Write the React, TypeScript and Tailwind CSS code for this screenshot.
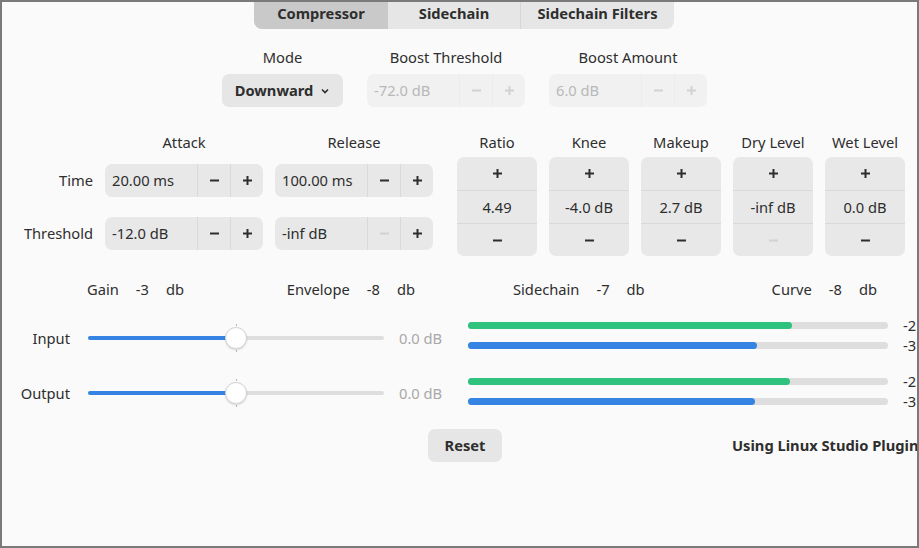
import React from "react";

function Plus({ faded }: { faded?: boolean }) {
  return (
    <svg width="11" height="11" viewBox="0 0 11 11" className={faded ? "text-[#d2d2d2]" : "text-[#2e2e2e]"}>
      <path d="M5.5 1v9M1 5.5h9" stroke="currentColor" strokeWidth="2" />
    </svg>
  );
}

function Minus({ faded }: { faded?: boolean }) {
  return (
    <svg width="11" height="11" viewBox="0 0 11 11" className={faded ? "text-[#d2d2d2]" : "text-[#2e2e2e]"}>
      <path d="M1 5.5h9" stroke="currentColor" strokeWidth="2" />
    </svg>
  );
}

function HSpin({ value, disabled, minusOff }: { value: string; disabled?: boolean; minusOff?: boolean }) {
  return (
    <div
      className={
        "flex h-[33px] w-[158px] overflow-hidden rounded-[7px] " +
        (disabled ? "bg-[#f1f1f1]" : "bg-[#e8e8e8]")
      }
    >
      <div className={"flex flex-1 items-center pl-[7px] " + (disabled ? "text-[#b8b8b8]" : "")}>{value}</div>
      <div className={"flex w-[33px] items-center justify-center border-l " + (disabled ? "border-[#ececec]" : "border-[#d9d9d9]")}>
        <Minus faded={disabled || minusOff} />
      </div>
      <div className={"flex w-[33px] items-center justify-center border-l " + (disabled ? "border-[#ececec]" : "border-[#d9d9d9]")}>
        <Plus faded={disabled} />
      </div>
    </div>
  );
}

function VSpin({ label, value, minusOff }: { label: string; value: string; minusOff?: boolean }) {
  return (
    <div className="flex w-[80px] flex-col items-center">
      <div className="h-5 whitespace-nowrap leading-5">{label}</div>
      <div className="mt-[5px] flex h-[99px] w-[80px] flex-col overflow-hidden rounded-[7px] bg-[#e8e8e8]">
        <div className="flex h-[33px] items-center justify-center">
          <Plus />
        </div>
        <div className="flex h-[33px] items-center justify-center border-t border-[#d9d9d9]">{value}</div>
        <div className="flex h-[33px] items-center justify-center border-t border-[#d9d9d9]">
          <Minus faded={minusOff} />
        </div>
      </div>
    </div>
  );
}

function Slider({ label }: { label: string }) {
  return (
    <div className="flex h-[34px] items-center">
      <div className="w-[68px] text-right">{label}</div>
      <div className="relative ml-[18px] flex h-[34px] w-[296px] items-center">
        <div className="h-[4px] w-full rounded-full bg-[#dedede]" />
        <div className="absolute left-0 top-[15px] h-[4px] w-[148px] rounded-full bg-[#3584e4]" />
        <div className="absolute left-[148px] top-[3px] h-[2px] w-px bg-[#b4b4b4]" />
        <div className="absolute left-[148px] bottom-[3px] h-[2px] w-px bg-[#b4b4b4]" />
        <div className="absolute left-[137px] top-[6px] h-[22px] w-[22px] rounded-full border border-[#d4d4d4] bg-white shadow-[0_1px_2px_rgba(0,0,0,0.15)]" />
      </div>
      <div className="ml-[15px] text-[#a8a8a8]">0.0 dB</div>
    </div>
  );
}

function Meter({ fill, color, tag }: { fill: number; color: string; tag: string }) {
  return (
    <div className="flex h-5 items-center">
      <div className="relative h-[7px] w-[420px] shrink-0 rounded-full bg-[#dedede]">
        <div className={"absolute left-0 top-0 h-[7px] rounded-full " + color} style={{ width: fill }} />
      </div>
      <div className="ml-[15px] whitespace-nowrap">{tag}</div>
    </div>
  );
}

function Readout({ name, value }: { name: string; value: string }) {
  return (
    <div className="flex gap-[17px] whitespace-nowrap">
      <span>{name}</span>
      <span>{value}</span>
      <span>db</span>
    </div>
  );
}

export default function App() {
  return (
    <div className="relative h-[548px] w-[919px] overflow-hidden border-2 border-[#7a7a7a] bg-[#fafafa] font-['Noto_Sans',sans-serif] text-[14.7px] text-[#2e2e2e]">
      {/* tabs */}
      <div className="ml-[252px] flex h-[27px] w-[420px] overflow-hidden rounded-b-[8px] bg-[#e6e6e6] font-bold">
        <div className="flex w-[134px] items-center justify-center bg-[#c9c9c9] pb-[4px]">Compressor</div>
        <div className="flex w-[132px] items-center justify-center pb-[4px]">Sidechain</div>
        <div className="flex w-[154px] items-center justify-center border-l border-[#d6d6d6] pb-[4px]">Sidechain Filters</div>
      </div>

      {/* mode row */}
      <div className="ml-[220px] mt-[18px] flex gap-6">
        <div className="flex w-[121px] flex-col items-center">
          <div className="h-5 leading-5">Mode</div>
          <div className="mt-[7px] flex h-[33px] w-[121px] items-center justify-center gap-[7px] rounded-[7px] bg-[#e6e6e6] font-bold">
            Downward
            <svg width="10" height="10" viewBox="0 0 10 10">
              <path d="M2 3.5l3 3 3-3" stroke="#2e2e2e" strokeWidth="1.6" fill="none" />
            </svg>
          </div>
        </div>
        <div className="flex w-[158px] flex-col items-center">
          <div className="h-5 whitespace-nowrap leading-5">Boost Threshold</div>
          <div className="mt-[7px]">
            <HSpin value="-72.0 dB" disabled />
          </div>
        </div>
        <div className="flex w-[158px] flex-col items-center">
          <div className="h-5 whitespace-nowrap leading-5">Boost Amount</div>
          <div className="mt-[7px]">
            <HSpin value="6.0 dB" disabled />
          </div>
        </div>
      </div>

      {/* attack / release + vertical spinners */}
      <div className="mt-[25px] flex items-start">
        <div className="ml-[11px] grid grid-cols-[80px_158px_158px] content-start gap-x-3">
          <div />
          <div className="h-5 text-center leading-5">Attack</div>
          <div className="h-5 text-center leading-5">Release</div>

          <div className="mt-3 flex h-[33px] items-center justify-end">Time</div>
          <div className="mt-3"><HSpin value="20.00 ms" /></div>
          <div className="mt-3"><HSpin value="100.00 ms" /></div>

          <div className="mt-5 flex h-[33px] items-center justify-end">Threshold</div>
          <div className="mt-5"><HSpin value="-12.0 dB" /></div>
          <div className="mt-5"><HSpin value="-inf dB" minusOff /></div>
        </div>
        <div className="ml-6 flex gap-3">
          <VSpin label="Ratio" value="4.49" />
          <VSpin label="Knee" value="-4.0 dB" />
          <VSpin label="Makeup" value="2.7 dB" />
          <VSpin label="Dry Level" value="-inf dB" minusOff />
          <VSpin label="Wet Level" value="0.0 dB" />
        </div>
      </div>

      {/* levels */}
      <div className="mt-[23px] flex">
        <div className="w-[443px] shrink-0">
          <div className="ml-[85px] flex h-5 w-[328px] justify-between leading-5">
            <Readout name="Gain" value="-3" />
            <Readout name="Envelope" value="-8" />
          </div>
          <div className="mt-[22px]">
            <Slider label="Input" />
          </div>
          <div className="mt-[21px]">
            <Slider label="Output" />
          </div>
        </div>
        <div className="ml-[23px]">
          <div className="ml-[45px] flex h-5 w-[364px] justify-between leading-5">
            <Readout name="Sidechain" value="-7" />
            <Readout name="Curve" value="-8" />
          </div>
          <div className="mt-4">
            <Meter fill={324} color="bg-[#2ec27e]" tag="-2" />
            <Meter fill={289} color="bg-[#3584e4]" tag="-3" />
          </div>
          <div className="mt-4">
            <Meter fill={322} color="bg-[#2ec27e]" tag="-2" />
            <Meter fill={287} color="bg-[#3584e4]" tag="-3" />
          </div>
        </div>
      </div>

      {/* footer */}
      <div className="mt-[18px] flex items-center">
        <div className="ml-[426px] flex h-[33px] w-[74px] shrink-0 items-center justify-center rounded-[7px] bg-[#e6e6e6] font-bold">
          Reset
        </div>
        <div className="ml-[230px] shrink-0 whitespace-nowrap font-bold">Using Linux Studio Plugins</div>
      </div>
    </div>
  );
}
